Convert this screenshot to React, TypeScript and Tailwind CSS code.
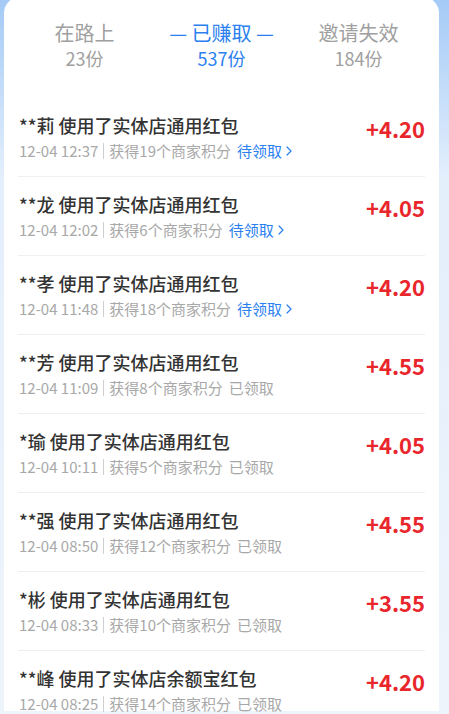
import { ChevronRight } from 'lucide-react';

interface Record {
  name: string;
  what: string;
  time: string;
  points: number;
  amount: string;
  pending: boolean;
}

const records: Record[] = [
  { name: '**莉', what: '实体店通用红包', time: '12-04 12:37', points: 19, amount: '+4.20', pending: true },
  { name: '**龙', what: '实体店通用红包', time: '12-04 12:02', points: 6, amount: '+4.05', pending: true },
  { name: '**孝', what: '实体店通用红包', time: '12-04 11:48', points: 18, amount: '+4.20', pending: true },
  { name: '**芳', what: '实体店通用红包', time: '12-04 11:09', points: 8, amount: '+4.55', pending: false },
  { name: '*瑜', what: '实体店通用红包', time: '12-04 10:11', points: 5, amount: '+4.05', pending: false },
  { name: '**强', what: '实体店通用红包', time: '12-04 08:50', points: 12, amount: '+4.55', pending: false },
  { name: '*彬', what: '实体店通用红包', time: '12-04 08:33', points: 10, amount: '+3.55', pending: false },
  { name: '**峰', what: '实体店余额宝红包', time: '12-04 08:25', points: 14, amount: '+4.20', pending: false },
];

const font = { fontFamily: '"Noto Sans CJK SC", "Noto Sans", sans-serif' };

function Tab({ label, count, active }: { label: string; count: string; active?: boolean }) {
  return (
    <div className={`flex flex-col items-center ${active ? 'text-[#2b7ff0]' : 'text-[#a0a0a0]'}`}>
      <div className="text-[20px] leading-[26px]">
        {active ? <span>— {label} —</span> : label}
      </div>
      <div className="text-[18px] leading-[22px] mt-[1px]">{count}</div>
    </div>
  );
}

export default function App() {
  return (
    <div
      className="h-[714px] w-[449px] overflow-hidden bg-gradient-to-b from-[#a4caf6] via-[#e4effc] via-25% to-[#eef4fb] pl-[4px] pr-[10px]"
      style={font}
    >
      <div className="bg-white rounded-t-[16px] h-full -mt-[3px] pt-[3px]">
        <div className="grid grid-cols-3 px-[12px] pt-[20px] h-[98px]">
          <Tab label="在路上" count="23份" />
          <Tab label="已赚取" count="537份" active />
          <Tab label="邀请失效" count="184份" />
        </div>
        <ul className="px-[14px]">
          {records.map((r, i) => (
            <li key={i} className="flex items-start border-b border-[#efefef] pt-[14px] pb-[14px] pl-[1px]">
              <div className="flex-1">
                <div className="text-[18px] leading-[26px] font-medium text-[#333]">
                  {r.name} 使用了{r.what}
                </div>
                <div className="mt-[2px] flex items-center text-[15px] leading-[22px] text-[#a8a8a8]">
                  <span>{r.time}</span>
                  <span className="mx-[5px] h-[16px] w-px bg-[#cfcfcf]" />
                  <span>获得{r.points}个商家积分</span>
                  {r.pending ? (
                    <span className="ml-[6px] flex items-center text-[#2b7ff0]">
                      待领取
                      <ChevronRight size={16} strokeWidth={1.8} className="-ml-[1px]" />
                    </span>
                  ) : (
                    <span className="ml-[6px]">已领取</span>
                  )}
                </div>
              </div>
              <div className="pt-[1px] text-[22px] leading-[30px] font-bold text-[#e8262c]">
                {r.amount}
              </div>
            </li>
          ))}
        </ul>
      </div>
    </div>
  );
}
